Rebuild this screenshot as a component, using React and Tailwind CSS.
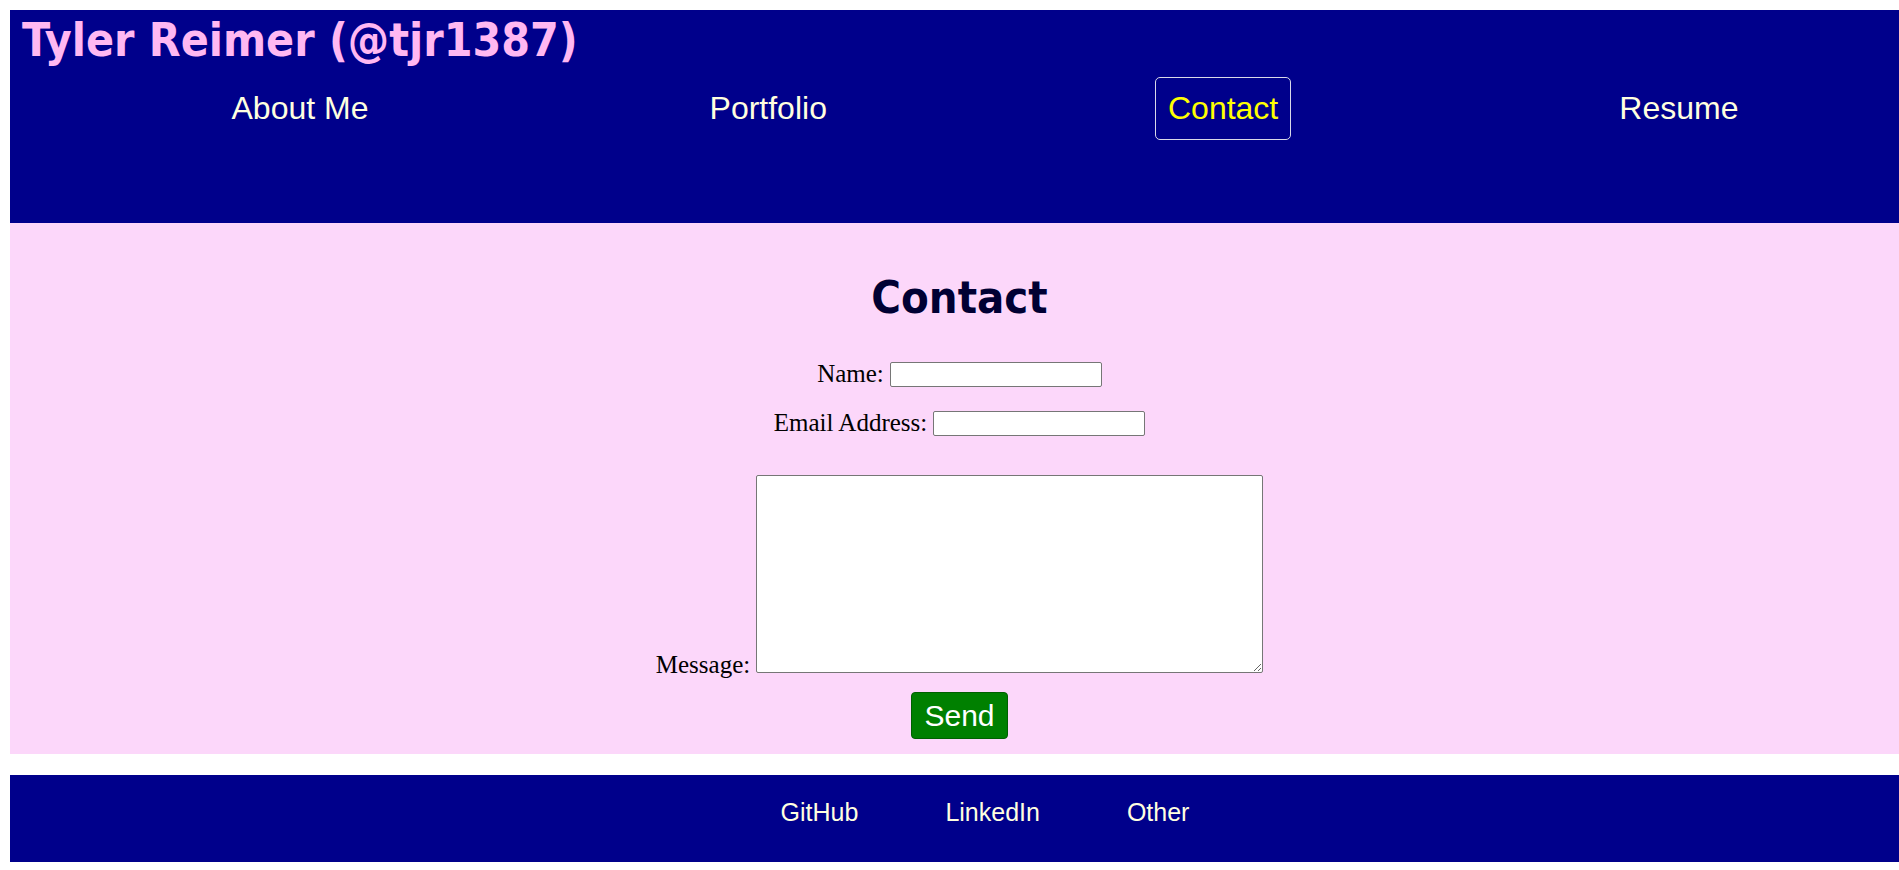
const navLinks = [
  { label: 'About Me', active: false },
  { label: 'Portfolio', active: false },
  { label: 'Contact', active: true },
  { label: 'Resume', active: false },
]

const footerLinks = ['GitHub', 'LinkedIn', 'Other']

export default function App() {
  return (
    <div className="min-h-screen bg-white overflow-hidden">
      <div className="ml-[10px] pt-[10px] w-[1899px]">
        <header className="bg-[#00008b] h-[213px]">
          <h1 className="pl-[12px] pt-[2px] text-[46px] leading-[56px] font-bold font-stretch-condensed text-[#ffb8f2] font-['Tahoma','DejaVu_Sans',sans-serif]">
            Tyler Reimer (@tjr1387)
          </h1>
          <nav className="flex justify-around pl-[51px] mt-[9px] font-['Liberation_Sans',Arial,sans-serif]">
            {navLinks.map((link) => (
              <a
                key={link.label}
                href="#"
                className={
                  link.active
                    ? 'px-[12px] py-[12px] text-[32px] leading-[37px] text-[#ffff00] border border-[#d8d8e8] rounded-[5px]'
                    : 'px-[12px] py-[12px] text-[32px] leading-[37px] text-[#ffffe0] border border-transparent rounded-[5px]'
                }
              >
                {link.label}
              </a>
            ))}
          </nav>
        </header>

        <main className="bg-[#fcd7fa] flex flex-col items-center pt-[51px] pb-[15px] font-['Liberation_Serif','Times_New_Roman',serif] text-[25px] text-black">
          <h2 className="text-[45px] leading-[48px] font-bold font-stretch-condensed text-[#000033] font-['Tahoma','DejaVu_Sans',sans-serif]">
            Contact
          </h2>
          <div className="flex items-center gap-[6px] mt-[38px] h-[28px]">
            <label htmlFor="name">Name:</label>
            <input
              id="name"
              type="text"
              className="w-[212px] h-[25px] bg-white border border-[#767676] rounded-[2px]"
            />
          </div>
          <div className="flex items-center gap-[6px] mt-[21px] h-[28px]">
            <label htmlFor="email">Email Address:</label>
            <input
              id="email"
              type="email"
              className="w-[212px] h-[25px] bg-white border border-[#767676] rounded-[2px]"
            />
          </div>
          <div className="flex items-end gap-[6px] mt-[38px]">
            <label htmlFor="message" className="leading-[25px] mb-[-4px]">Message:</label>
            <textarea
              id="message"
              className="w-[507px] h-[198px] bg-white border border-[#767676] rounded-[2px] resize-y"
            />
          </div>
          <button
            type="button"
            className="mt-[19px] px-[12px] py-[6px] bg-[#008000] text-white text-[30px] leading-[33px] border border-[#006000] rounded-[4px] font-['Liberation_Sans',Arial,sans-serif]"
          >
            Send
          </button>
        </main>

        <footer className="mt-[21px] bg-[#00008b] h-[87px] flex items-center justify-center gap-[87px] pl-[51px] pb-[12px] font-['Liberation_Sans',Arial,sans-serif]">
          {footerLinks.map((item) => (
            <a key={item} href="#" className="text-[25px] leading-[29px] text-[#ffffe0]">
              {item}
            </a>
          ))}
        </footer>
      </div>
    </div>
  )
}
